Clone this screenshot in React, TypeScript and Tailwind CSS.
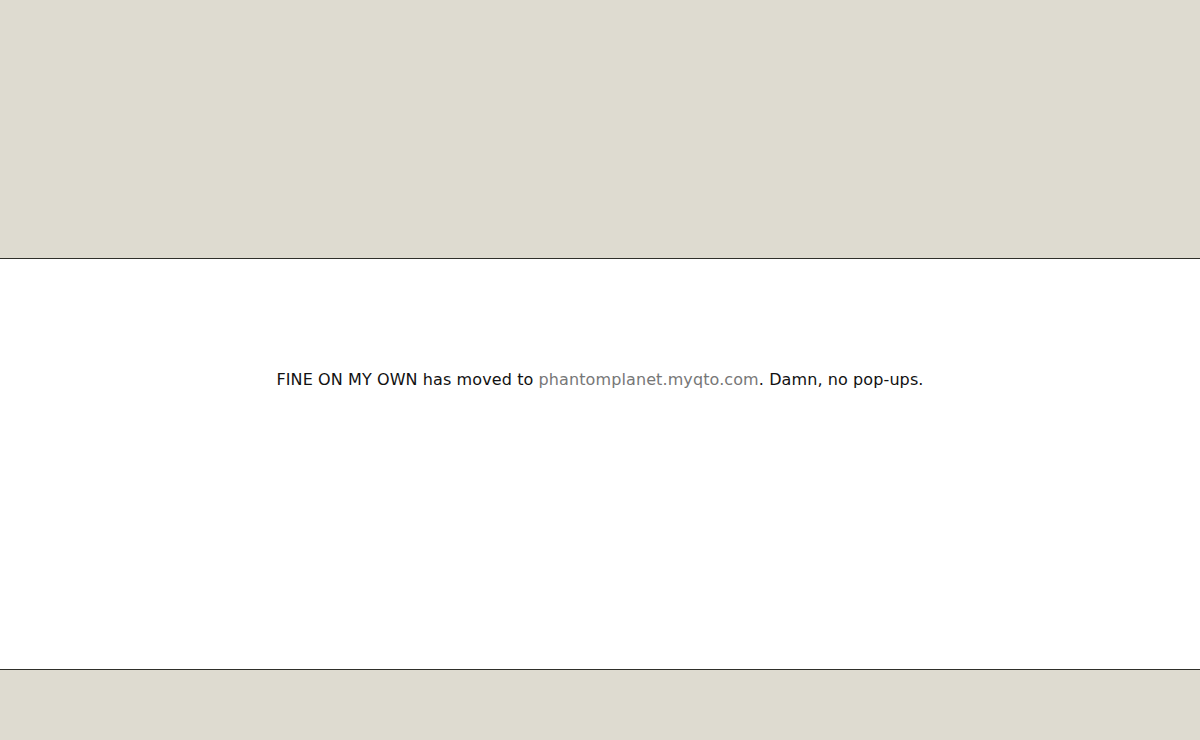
export default function App() {
  return (
    <div className="flex h-[740px] flex-col bg-white font-['DejaVu_Sans',Verdana,sans-serif]">
      <div className="h-[259px] shrink-0 border-b border-[#2f2f2a] bg-[#dedbd0]" />
      <div className="h-[410px] shrink-0 pt-[111px] text-center text-[16px] leading-5 tracking-[0.1px] text-[#111]">
        <p>
          FINE ON MY OWN has moved to{' '}
          <a href="#" className="text-[#777]">
            phantomplanet.myqto.com
          </a>
          . Damn, no pop-ups.
        </p>
      </div>
      <div className="flex-1 border-t border-[#2f2f2a] bg-[#dedbd0]" />
    </div>
  );
}
